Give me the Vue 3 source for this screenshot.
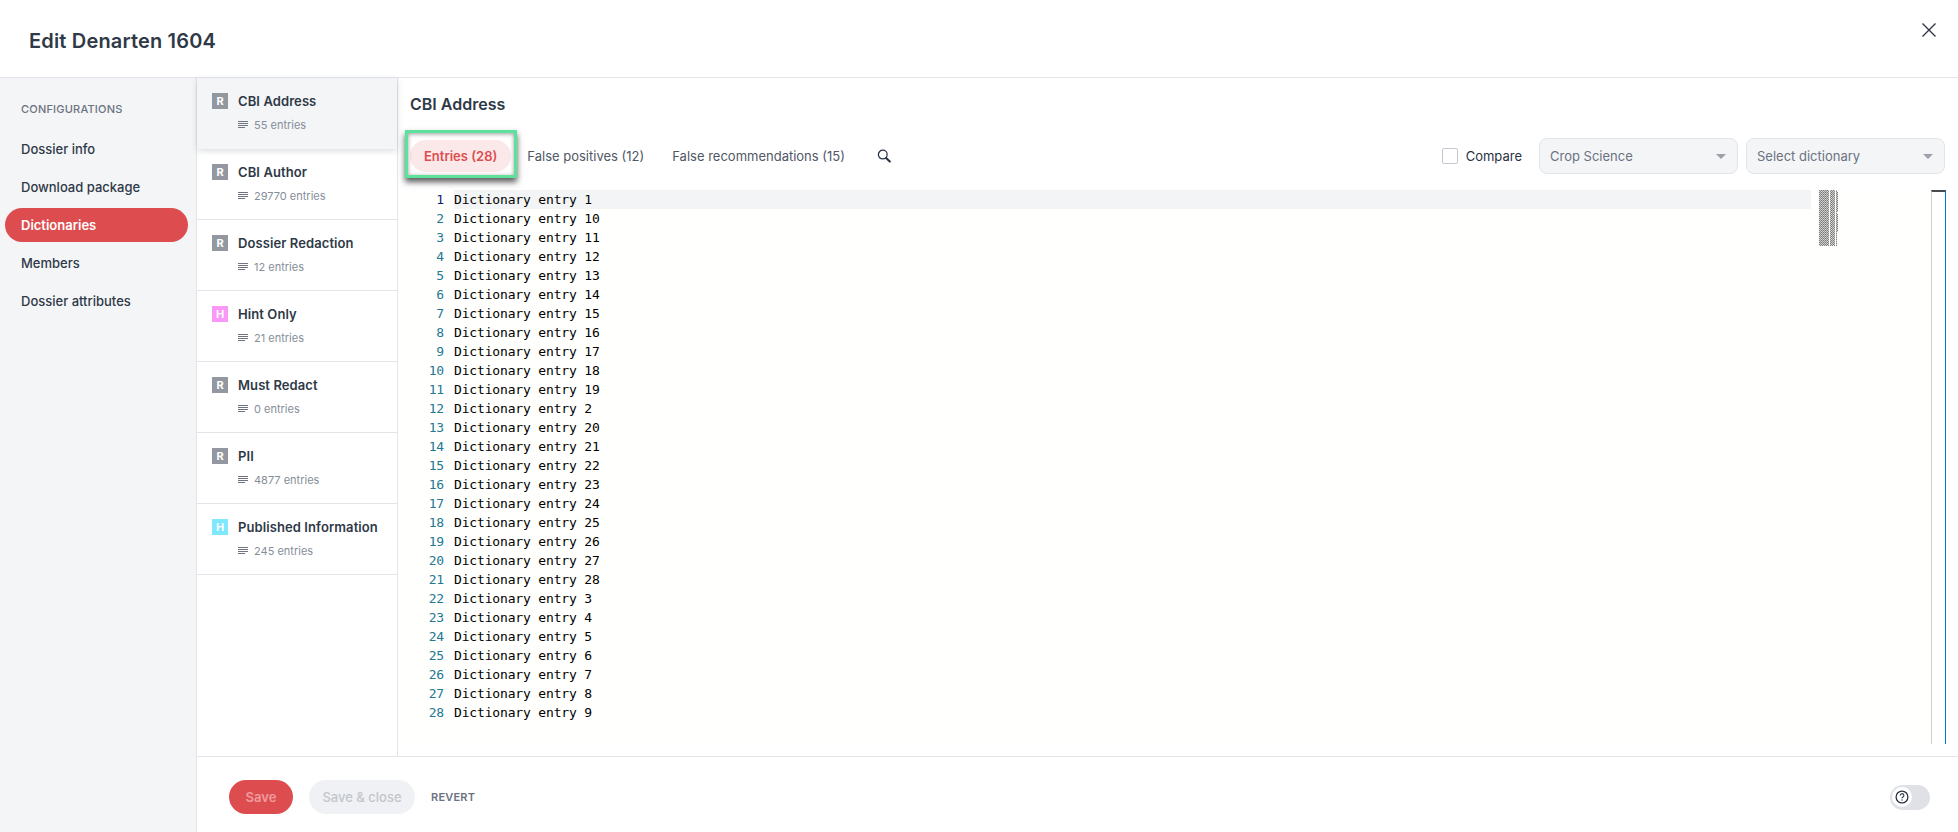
<script setup>
import { computed } from 'vue'

const nav = ['Dossier info', 'Download package', 'Dictionaries', 'Members', 'Dossier attributes']
const dicts = [
  { name: 'CBI Address', count: 55, type: 'R', color: '#9398a0', active: true },
  { name: 'CBI Author', count: 29770, type: 'R', color: '#9398a0' },
  { name: 'Dossier Redaction', count: 12, type: 'R', color: '#9398a0' },
  { name: 'Hint Only', count: 21, type: 'H', color: '#fa98f7' },
  { name: 'Must Redact', count: 0, type: 'R', color: '#9398a0' },
  { name: 'PII', count: 4877, type: 'R', color: '#9398a0' },
  { name: 'Published Information', count: 245, type: 'H', color: '#7fe8fd' }
]
const suffixes = [1, 10, 11, 12, 13, 14, 15, 16, 17, 18, 19, 2, 20, 21, 22, 23, 24, 25, 26, 27, 28, 3, 4, 5, 6, 7, 8, 9]
const lines = suffixes.map((n) => `Dictionary entry ${n}`)

const miniCells = computed(() => {
  const cells = []
  lines.forEach((text, row) => {
    ;[...text].forEach((ch, col) => {
      if (ch !== ' ') {
        cells.push({ key: `${row}-${col}-a`, x: col, y: row * 2, o: col % 2 ? 0.3 : 0.72 })
        cells.push({ key: `${row}-${col}-b`, x: col, y: row * 2 + 1, o: col % 2 ? 0.62 : 0.2 })
      }
    })
  })
  return cells
})
</script>

<template>
  <div class="dialog">
    <header class="top">
      <h1 class="title">Edit Denarten 1604</h1>
      <button class="close" aria-label="Close">
        <svg width="16" height="16" viewBox="0 0 16 16"><path d="M1.5 1.5 14.5 14.5M14.5 1.5 1.5 14.5" stroke="#283241" stroke-width="1.3" fill="none" /></svg>
      </button>
    </header>

    <div class="body">
      <aside class="side">
        <div class="side-label">CONFIGURATIONS</div>
        <nav class="side-nav">
          <a v-for="item in nav" :key="item" class="side-item" :class="{ on: item === 'Dictionaries' }">{{ item }}</a>
        </nav>
      </aside>

      <div class="work">
        <div class="panes">
          <ul class="dict-list">
            <li v-for="d in dicts" :key="d.name" class="dict" :class="{ on: d.active }">
              <span class="badge" :style="{ background: d.color }">{{ d.type }}</span>
              <div class="dict-text">
                <div class="dict-name">{{ d.name }}</div>
                <div class="dict-sub">
                  <svg width="10" height="8" viewBox="0 0 10 8"><path d="M0 .5h10M0 2.5h10M0 4.5h10M0 6.5h7" stroke="#6f7480" stroke-width="1" fill="none" /></svg>
                  <span>{{ d.count }} entries</span>
                </div>
              </div>
            </li>
          </ul>

          <section class="detail">
            <h2 class="detail-title">CBI Address</h2>
            <div class="toolbar">
              <div class="tabs">
                <button class="tab active">Entries (28)</button>
                <button class="tab">False positives (12)</button>
                <button class="tab">False recommendations (15)</button>
                <button class="search" aria-label="Search">
                  <svg width="14" height="14" viewBox="0 0 16 16" fill="none">
                    <circle cx="6.6" cy="6.4" r="5" stroke="#283241" stroke-width="1.4" />
                    <path d="M10.4 10.4 14.6 14.4" stroke="#283241" stroke-width="2.4" stroke-linecap="round" />
                  </svg>
                </button>
              </div>
              <div class="tools">
                <label class="compare"><span class="check"></span>Compare</label>
                <div class="select">Crop Science<i class="caret"></i></div>
                <div class="select">Select dictionary<i class="caret"></i></div>
              </div>
            </div>

            <div class="editor">
              <div class="gutter">
                <div v-for="(l, i) in lines" :key="i" class="num" :class="{ cur: i === 0 }">{{ i + 1 }}</div>
              </div>
              <div class="code">
                <div v-for="(l, i) in lines" :key="i" class="line" :class="{ cur: i === 0 }">{{ l }}</div>
              </div>
              <div class="right-rail">
                <svg class="minimap" width="20" height="56" viewBox="0 0 20 56">
                  <rect v-for="c in miniCells" :key="c.key" :x="c.x" :y="c.y" width="1" height="1" fill="#444" :opacity="c.o" />
                </svg>
                <div class="overview"></div>
              </div>
            </div>
          </section>
        </div>

        <footer class="foot">
          <button class="btn primary">Save</button>
          <button class="btn muted">Save &amp; close</button>
          <button class="revert">REVERT</button>
          <div class="toggle">
            <span class="knob">
              <svg width="14" height="14" viewBox="0 0 14 14" fill="none">
                <circle cx="7" cy="7" r="5.9" stroke="#283241" stroke-width="1.3" />
                <path d="M5.3 5.5a1.8 1.8 0 1 1 2.7 1.5c-.7.4-1 .7-1 1.3" stroke="#283241" stroke-width="1.1" />
                <circle cx="7" cy="10" r=".7" fill="#283241" />
              </svg>
            </span>
          </div>
        </footer>
      </div>
    </div>
  </div>
</template>

<style>
html, body { margin: 0; background: #fff; }
</style>

<style scoped>
.dialog {
  width: 1958px;
  height: 832px;
  display: flex;
  flex-direction: column;
  font-family: Inter, "Noto Sans", sans-serif;
  color: #2f3947;
  background: #fff;
  overflow: hidden;
}
button { font-family: inherit; border: 0; background: none; padding: 0; cursor: pointer; }
.top {
  height: 78px;
  box-sizing: border-box;
  flex: none;
  border-bottom: 1px solid #e2e4e9;
  display: flex;
  align-items: flex-start;
  justify-content: space-between;
  padding: 0 21px 0 29px;
}
.title { margin: 29px 0 0; font-size: 20px; line-height: 24px; font-weight: 600; letter-spacing: 0.17px; }
.close { margin-top: 22px; width: 16px; height: 16px; display: block; }
.close svg { display: block; }
.body { flex: 1; display: flex; min-height: 0; }
.side {
  width: 197px;
  box-sizing: border-box;
  flex: none;
  background: #f4f5f7;
  border-right: 1px solid #e2e4e9;
  padding: 23px 0 0;
}
.side-label {
  padding-left: 21px;
  font-size: 11px;
  line-height: 16px;
  font-weight: 500;
  color: #6b7280;
  letter-spacing: 0.2px;
  margin-bottom: 15px;
}
.side-nav { display: flex; flex-direction: column; gap: 4px; padding: 0 8px 0 5px; }
.side-item {
  height: 34px;
  line-height: 35px;
  padding-left: 16px;
  border-radius: 17px;
  font-size: 13px;
  font-weight: 500;
}
.side-item.on { background: #dd4d50; color: #fff; font-weight: 600; }
.work { flex: 1; min-width: 0; display: flex; flex-direction: column; }
.panes { flex: 1; min-height: 0; display: flex; }
.dict-list {
  list-style: none;
  margin: 0;
  padding: 0;
  width: 201px;
  box-sizing: border-box;
  flex: none;
  border-right: 1px solid #e2e4e9;
}
.dict {
  height: 71px;
  box-sizing: border-box;
  border-bottom: 1px solid #e2e4e9;
  padding: 15px 8px 0 15px;
  display: flex;
  gap: 10px;
}
.dict.on {
  background: #f4f5f7;
  border-bottom-color: transparent;
  box-shadow: 0 2px 6px rgba(40, 50, 65, 0.16);
  position: relative;
}
.badge {
  width: 16px;
  height: 16px;
  flex: none;
  color: #fff;
  font-size: 11px;
  font-weight: 700;
  line-height: 16px;
  text-align: center;
}
.dict-name { font-size: 13px; line-height: 17px; font-weight: 600; white-space: nowrap; letter-spacing: 0.09px; }
.dict-sub {
  margin-top: 7px;
  display: flex;
  align-items: center;
  gap: 6px;
  font-size: 11px;
  line-height: 16px;
  color: #868e99;
}
.detail { flex: 1; min-width: 0; display: flex; flex-direction: column; padding: 16px 13px 12px 0; }
.detail-title { margin: 0 0 0 12px; font-size: 16px; line-height: 21px; font-weight: 600; }
.toolbar {
  margin-top: 23px;
  height: 36px;
  display: flex;
  align-items: center;
  justify-content: space-between;
  padding-left: 12px;
}
.tabs { display: flex; align-items: center; }
.tab {
  height: 32px;
  padding: 0 14px;
  border-radius: 16px;
  font-size: 13px;
  font-weight: 400;
  color: #4f5866;
  white-space: nowrap;
}
.tab.active {
  position: relative;
  background: #fbe8e9;
  color: #dd4d50;
  font-weight: 600;
  margin-right: 2px;
}
.tab.active::after {
  content: "";
  position: absolute;
  left: -5px;
  right: -6px;
  top: -10px;
  bottom: -6px;
  box-sizing: border-box;
  border: 3px solid #5ce29a;
  box-shadow: 0 4px 6px rgba(0, 0, 0, 0.65), inset 0 1px 4px rgba(0, 0, 0, 0.4);
}
.search { margin-left: 18px; width: 14px; height: 14px; }
.search svg { display: block; }
.tools { display: flex; align-items: center; }
.compare {
  display: flex;
  align-items: center;
  gap: 8px;
  font-size: 13px;
  font-weight: 400;
  color: #283241;
  margin-right: 17px;
}
.check {
  width: 16px;
  height: 16px;
  box-sizing: border-box;
  border: 1px solid #c4c7ce;
  border-radius: 2px;
  background: #fff;
}
.select {
  width: 199px;
  height: 36px;
  box-sizing: border-box;
  background: #f4f5f7;
  border: 1px solid #e2e4e9;
  border-radius: 8px;
  padding: 0 11px 0 10px;
  font-size: 13px;
  line-height: 34px;
  color: #6b7280;
  display: flex;
  align-items: center;
  justify-content: space-between;
  margin-left: 8px;
}
.compare + .select { margin-left: 0; }
.caret {
  width: 0;
  height: 0;
  border-left: 5px solid transparent;
  border-right: 5px solid transparent;
  border-top: 5px solid #9ba0a9;
}
.editor {
  margin-top: 16px;
  flex: 1;
  min-height: 0;
  display: flex;
  background: #fffffe;
  font-family: "DejaVu Sans Mono", "Liberation Mono", monospace;
  font-size: 13px;
  letter-spacing: -0.16px;
  line-height: 19px;
  color: #000;
}
.gutter { width: 56px; flex: none; text-align: right; box-sizing: border-box; padding-right: 10px; color: #237893; }
.num.cur { color: #0b216f; }
.code { width: 1357px; flex: none; }
.line { height: 19px; white-space: pre; }
.line.cur { background: #f3f4f6; }
.right-rail {
  flex: 1;
  display: flex;
  justify-content: space-between;
  align-items: flex-start;
  padding-left: 8px;
}
.minimap { display: block; }
.overview {
  width: 15px;
  height: 100%;
  margin-right: -1px;
  box-sizing: border-box;
  border-left: 1px solid #d0d0d0;
  border-right: 1px solid #0078d4;
  border-top: 2px solid #4a4a4a;
}
.foot {
  height: 76px;
  box-sizing: border-box;
  flex: none;
  border-top: 1px solid #e2e4e9;
  display: flex;
  align-items: center;
  padding: 5px 28px 0 32px;
}
.btn { height: 34px; border-radius: 17px; font-size: 13px; font-weight: 500; }
.primary { width: 64px; background: #dd4d50; color: #f19a9c; font-weight: 600; }
.muted { width: 106px; margin-left: 16px; background: #f0f1f4; color: #c3c6cd; }
.revert { margin-left: 16px; font-size: 11px; font-weight: 600; letter-spacing: 0.2px; color: #6b7280; }
.toggle {
  margin-left: auto;
  width: 40px;
  height: 25px;
  border-radius: 13px;
  background: #dfe1e6;
  display: flex;
  align-items: center;
  padding-left: 2px;
  box-sizing: border-box;
}
.knob {
  width: 20px;
  height: 20px;
  border-radius: 50%;
  background: #fff;
  display: flex;
  align-items: center;
  justify-content: center;
}
</style>
